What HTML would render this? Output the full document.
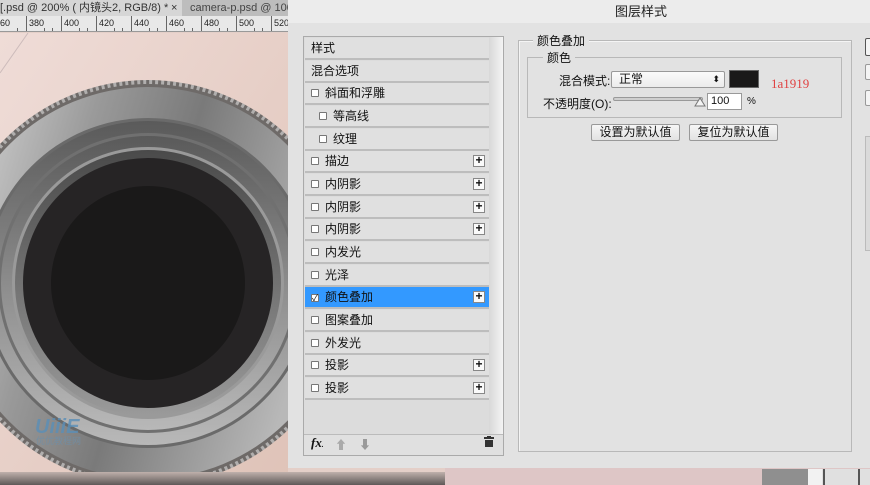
<!DOCTYPE html>
<html><head><meta charset="utf-8"><style>
*{margin:0;padding:0;box-sizing:border-box}
body{width:870px;height:485px;overflow:hidden;position:relative;background:#e4cfc8;font-family:"Liberation Sans","Noto Sans CJK SC",sans-serif;font-size:12px;color:#111}
.a{position:absolute}
.row{position:absolute;left:305px;width:184px;height:22px;border-bottom:2px solid #bdbdbd;background:#e0e0e0;line-height:21px;padding-left:6px}
.cb{display:inline-block;width:8px;height:8px;border:1px solid #777;background:#fff;border-radius:1px;margin-right:6px;vertical-align:-0px}
.plus{position:absolute;right:4px;top:4px;width:12px;height:12px;border:1px solid #888;background:#fafafa;font-size:12px;line-height:9px;text-align:center;font-weight:bold}
.btn{position:absolute;height:17px;border:1px solid #999;border-radius:2px;background:linear-gradient(#f6f6f6,#e2e2e2);text-align:center;line-height:15px;font-size:12px}
</style></head><body>
<div class="a" style="left:0;top:0;width:288px;height:16px;background:#bdbdbd"></div>
<div class="a" style="left:0;top:0;width:182px;height:16px;background:#d6d6d6;font-size:11px;line-height:16px;color:#333;white-space:nowrap;overflow:hidden">[.psd @ 200% ( 内镜头2, RGB/8) *<span style="position:absolute;left:171px">×</span></div>
<div class="a" style="left:190px;top:0;width:98px;height:16px;font-size:11px;line-height:16px;color:#444;white-space:nowrap;overflow:hidden">camera-p.psd @ 100</div>
<div class="a" style="left:0;top:16px;width:288px;height:16px;background:#e8e8e8;border-bottom:1px solid #999;overflow:hidden">
<svg width="288" height="16" style="position:absolute;left:0;top:0">
<g stroke="#666" stroke-width="1">
<line x1="26.5" y1="0" x2="26.5" y2="16"/><line x1="61.5" y1="0" x2="61.5" y2="16"/><line x1="96.5" y1="0" x2="96.5" y2="16"/><line x1="131.5" y1="0" x2="131.5" y2="16"/><line x1="166.5" y1="0" x2="166.5" y2="16"/><line x1="201.5" y1="0" x2="201.5" y2="16"/><line x1="236.5" y1="0" x2="236.5" y2="16"/><line x1="271.5" y1="0" x2="271.5" y2="16"/>
<line x1="17.5" y1="12" x2="17.5" y2="16"/><line x1="44.5" y1="12" x2="44.5" y2="16"/><line x1="52.5" y1="12" x2="52.5" y2="16"/><line x1="79.5" y1="12" x2="79.5" y2="16"/><line x1="87.5" y1="12" x2="87.5" y2="16"/><line x1="114.5" y1="12" x2="114.5" y2="16"/><line x1="122.5" y1="12" x2="122.5" y2="16"/><line x1="149.5" y1="12" x2="149.5" y2="16"/><line x1="157.5" y1="12" x2="157.5" y2="16"/><line x1="184.5" y1="12" x2="184.5" y2="16"/><line x1="192.5" y1="12" x2="192.5" y2="16"/><line x1="219.5" y1="12" x2="219.5" y2="16"/><line x1="227.5" y1="12" x2="227.5" y2="16"/><line x1="254.5" y1="12" x2="254.5" y2="16"/><line x1="262.5" y1="12" x2="262.5" y2="16"/>
</g>
<g font-family="Liberation Sans" font-size="9" fill="#222">
<text x="0" y="10">60</text><text x="29" y="10">380</text><text x="64" y="10">400</text><text x="99" y="10">420</text><text x="134" y="10">440</text><text x="169" y="10">460</text><text x="204" y="10">480</text><text x="239" y="10">500</text><text x="274" y="10">520</text></g>
</svg></div>
<svg class="a" style="left:0;top:33px" width="288" height="452">
<defs>
<linearGradient id="met" x1="0" y1="0" x2="1" y2="0.3"><stop offset="0" stop-color="#dcdcdc"/><stop offset="0.35" stop-color="#9a9a9a"/><stop offset="0.6" stop-color="#7a7a7a"/><stop offset="1" stop-color="#b8b8b8"/></linearGradient>
<linearGradient id="met2" x1="0" y1="0" x2="0" y2="1"><stop offset="0" stop-color="#5a5a5a"/><stop offset="0.5" stop-color="#8c8c8c"/><stop offset="1" stop-color="#b8b8b8"/></linearGradient>
<linearGradient id="met3" x1="0" y1="0" x2="0" y2="1"><stop offset="0" stop-color="#4a4a4a"/><stop offset="1" stop-color="#9a9a9a"/></linearGradient>
<linearGradient id="bgp" x1="0" y1="0" x2="1" y2="1"><stop offset="0" stop-color="#efdcd7"/><stop offset="1" stop-color="#dfc3b8"/></linearGradient>
</defs>
<rect width="288" height="452" fill="url(#bgp)"/>
<line x1="0" y1="40" x2="28" y2="0" stroke="#cbb" stroke-width="1"/>
<circle cx="148" cy="250" r="203" fill="#6e6a68"/>
<circle cx="148" cy="250" r="201" fill="none" stroke="#ddd" stroke-width="4" stroke-dasharray="3 3" opacity=".6"/>
<circle cx="148" cy="250" r="196" fill="url(#met)"/>
<circle cx="148" cy="250" r="165" fill="#6a6a6a"/>
<circle cx="148" cy="250" r="162" fill="url(#met2)"/>
<circle cx="148" cy="250" r="150" fill="#707070"/>
<circle cx="148" cy="250" r="147" fill="url(#met2)"/>
<circle cx="148" cy="250" r="136" fill="#9a9a9a"/>
<circle cx="148" cy="250" r="133" fill="url(#met3)"/>
<circle cx="148" cy="250" r="125" fill="#262425"/>
<circle cx="148" cy="250" r="97" fill="#1a1919"/>
<text x="35" y="400" font-family="Liberation Sans" font-weight="bold" font-style="italic" font-size="20" fill="#5a8fb8" opacity=".8">UiiiE</text>
<text x="36" y="411" font-family="Noto Sans CJK SC" font-size="9" fill="#6f8fa8" opacity=".8">优优教程网</text>
</svg>
<div class="a" style="left:0;top:472px;width:445px;height:13px;background:linear-gradient(#bfb0ab,#5e5958)"></div>
<div class="a" style="left:288px;top:0;width:582px;height:468px;background:#e2e2e2"></div>
<div class="a" style="left:288px;top:0;width:582px;height:23px;background:#ececec"></div>
<div class="a" style="left:615px;top:0;line-height:23px;font-size:13px;color:#222">图层样式</div>
<div class="a" style="left:445px;top:468px;width:425px;height:17px;background:#dec6c6"></div>
<div class="a" style="left:762px;top:469px;width:108px;height:16px;background:#e0e0e0"></div>
<div class="a" style="left:762px;top:469px;width:47px;height:16px;background:#8f8f8f"></div>
<div class="a" style="left:808px;top:469px;width:14px;height:16px;background:#f2f2f2"></div>
<div class="a" style="left:823px;top:469px;width:2px;height:16px;background:#555"></div>
<div class="a" style="left:858px;top:469px;width:2px;height:16px;background:#555"></div>
<div class="a" style="left:303px;top:36px;width:201px;height:420px;border:1px solid #aaa;background:#dcdcdc"></div>
<div class="a" style="left:489px;top:37px;width:14px;height:397px;background:linear-gradient(90deg,#d8d8d8,#f4f4f4)"></div>
<div class="row" style="top:38px">样式</div>
<div class="row" style="top:61px">混合选项</div>
<div class="row" style="top:83px"><span class="cb"></span>斜面和浮雕</div>
<div class="row" style="top:106px;padding-left:14px"><span class="cb"></span>等高线</div>
<div class="row" style="top:129px;padding-left:14px"><span class="cb"></span>纹理</div>
<div class="row" style="top:151px"><span class="cb"></span>描边<span class="plus">+</span></div>
<div class="row" style="top:174px"><span class="cb"></span>内阴影<span class="plus">+</span></div>
<div class="row" style="top:197px"><span class="cb"></span>内阴影<span class="plus">+</span></div>
<div class="row" style="top:219px"><span class="cb"></span>内阴影<span class="plus">+</span></div>
<div class="row" style="top:242px"><span class="cb"></span>内发光</div>
<div class="row" style="top:265px"><span class="cb"></span>光泽</div>
<div class="row" style="top:287px;background:#3399ff;border-bottom-color:#bdbdbd"><span class="cb" style="font-size:9px;line-height:6px;text-align:center">✓</span>颜色叠加<span class="plus">+</span></div>
<div class="row" style="top:310px"><span class="cb"></span>图案叠加</div>
<div class="row" style="top:333px"><span class="cb"></span>外发光</div>
<div class="row" style="top:355px"><span class="cb"></span>投影<span class="plus">+</span></div>
<div class="row" style="top:378px"><span class="cb"></span>投影<span class="plus">+</span></div>
<div class="a" style="left:304px;top:434px;width:199px;height:21px;background:#e0e0e0;border-top:1px solid #bbb"></div>
<div class="a" style="left:311px;top:435px;font-style:italic;font-weight:bold;font-family:'Liberation Serif',serif;font-size:13px">fx<span style="font-size:7px">.</span></div>
<div class="a" style="left:335px;top:436px;color:#aaa;font-size:12px">⬆</div>
<div class="a" style="left:359px;top:436px;color:#999;font-size:12px">⬇</div>
<div class="a" style="left:484px;top:436px;width:10px;height:11px"><svg width="10" height="11"><rect x="0" y="1" width="10" height="2" fill="#333"/><rect x="3" y="0" width="4" height="2" fill="#333"/><rect x="1" y="4" width="8" height="7" fill="#333"/></svg></div>
<div class="a" style="left:518px;top:40px;width:334px;height:412px;border:1px solid #b8b8b8;box-shadow:inset 1px 1px #f4f4f4"></div>
<div class="a" style="left:533px;top:32px;background:#e2e2e2;padding:0 4px;font-size:12px">颜色叠加</div>
<div class="a" style="left:527px;top:57px;width:315px;height:61px;border:1px solid #b8b8b8"></div>
<div class="a" style="left:543px;top:49px;background:#e2e2e2;padding:0 4px">颜色</div>
<div class="a" style="left:559px;top:72px">混合模式:</div>
<div class="a" style="left:611px;top:71px;width:114px;height:17px;border:1px solid #999;border-radius:2px;background:linear-gradient(#fbfbfb,#ececec);padding-left:7px;line-height:15px">正常<span style="position:absolute;right:4px;top:0;font-size:9px">⬍</span></div>
<div class="a" style="left:729px;top:70px;width:30px;height:18px;background:#1a1919;border:1px solid #666"></div>
<div class="a" style="left:771px;top:76px;color:#e04040;font-family:'Liberation Serif',serif;font-size:13px">1a1919</div>
<div class="a" style="left:543px;top:95px">不透明度(O):</div>
<div class="a" style="left:613px;top:97px;width:90px;height:4px;border:1px solid #999;border-radius:2px;background:#cfcfcf"></div>
<svg class="a" style="left:694px;top:96px" width="12" height="11"><path d="M1 10 L6 2 L11 10 Z" fill="#f4f4f4" stroke="#777"/></svg>
<div class="a" style="left:707px;top:93px;width:35px;height:17px;border:1px solid #999;background:#fff;padding-left:3px;line-height:15px;font-size:11px">100</div>
<div class="a" style="left:747px;top:96px;font-size:10px">%</div>
<div class="btn" style="left:591px;top:124px;width:89px">设置为默认值</div>
<div class="btn" style="left:689px;top:124px;width:89px">复位为默认值</div>
<div class="a" style="left:865px;top:38px;width:10px;height:18px;border:1px solid #555;border-radius:2px;background:#f4f4f4"></div>
<div class="a" style="left:865px;top:64px;width:10px;height:16px;border:1px solid #999;border-radius:2px;background:#f4f4f4"></div>
<div class="a" style="left:865px;top:90px;width:10px;height:16px;border:1px solid #999;border-radius:2px;background:#f4f4f4"></div>
<div class="a" style="left:865px;top:136px;width:10px;height:115px;border:1px solid #bbb;background:#dadada"></div>
</body></html>
